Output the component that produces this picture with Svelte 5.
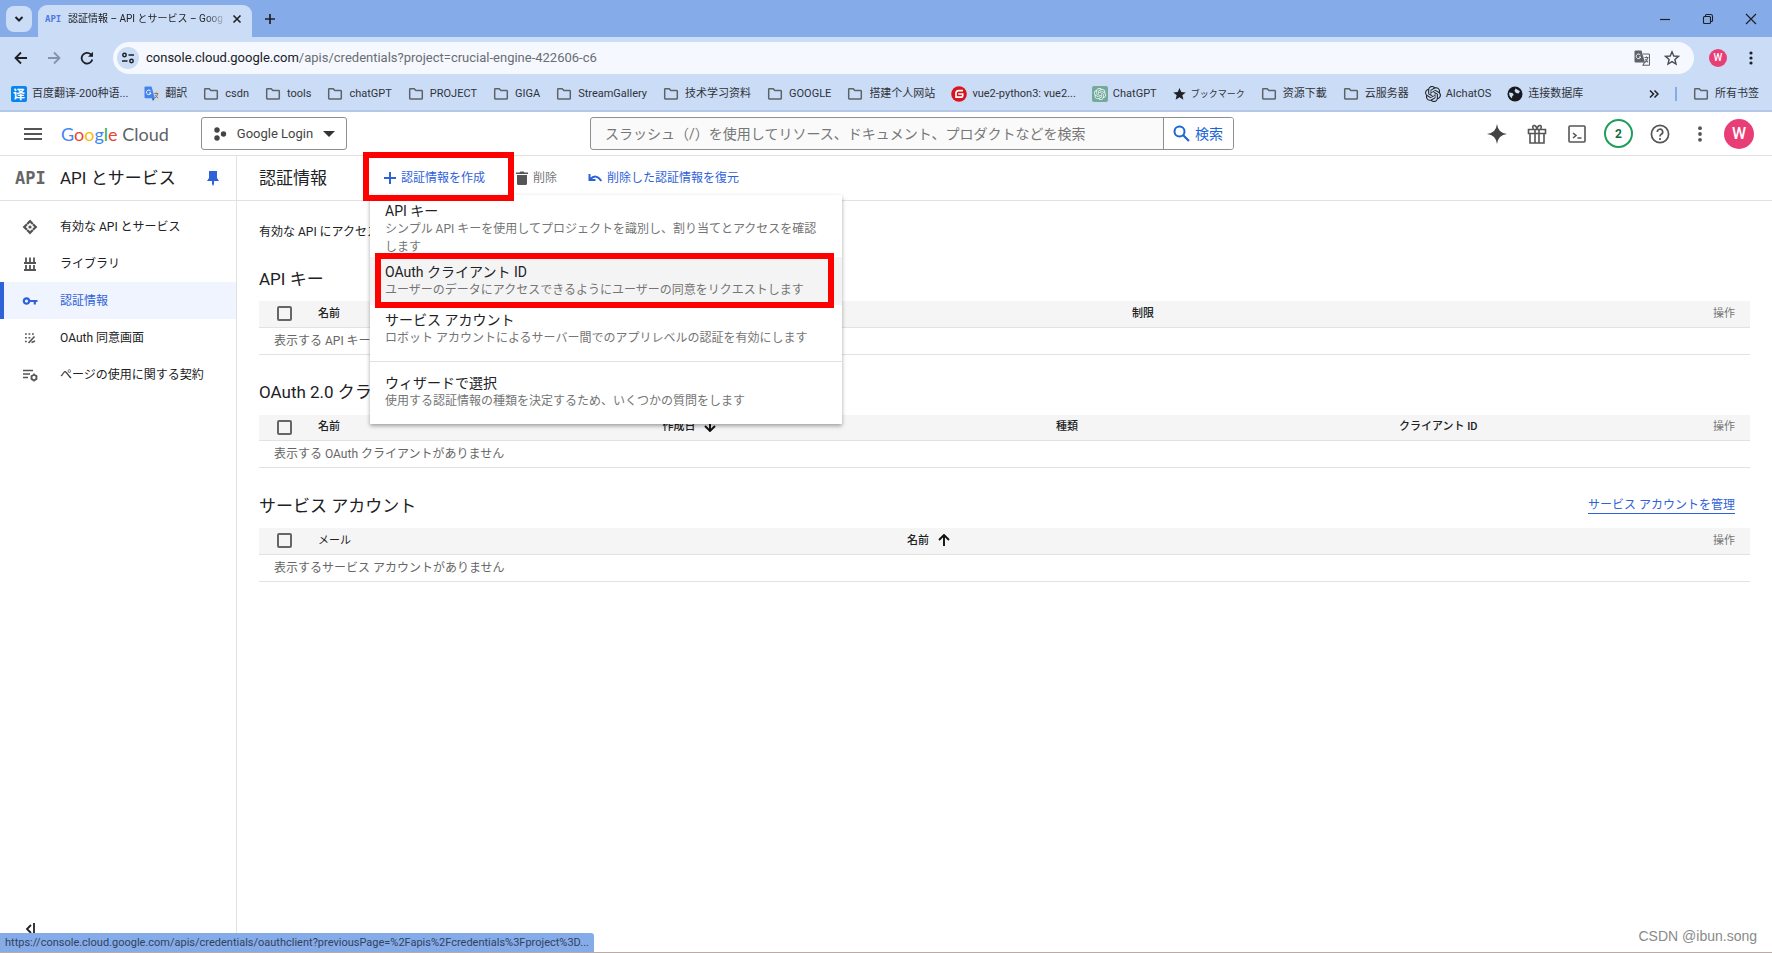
<script lang="ts">
  type Bookmark = { icon: string; label: string };

  const bookmarks: Bookmark[] = [
    { icon: 'baidu', label: '百度翻译-200种语...' },
    { icon: 'gtranslate', label: '翻訳' },
    { icon: 'folder', label: 'csdn' },
    { icon: 'folder', label: 'tools' },
    { icon: 'folder', label: 'chatGPT' },
    { icon: 'folder', label: 'PROJECT' },
    { icon: 'folder', label: 'GIGA' },
    { icon: 'folder', label: 'StreamGallery' },
    { icon: 'folder', label: '技术学习资料' },
    { icon: 'folder', label: 'GOOGLE' },
    { icon: 'folder', label: '搭建个人网站' },
    { icon: 'gitee', label: 'vue2-python3: vue2...' },
    { icon: 'gpt', label: 'ChatGPT' },
    { icon: 'star', label: 'ブックマーク' },
    { icon: 'folder', label: '资源下載' },
    { icon: 'folder', label: '云服务器' },
    { icon: 'knot', label: 'AIchatOS' },
    { icon: 'globe', label: '连接数据库' },
  ];

  const navItems = [
    { icon: 'diamond', label: '有効な API とサービス' },
    { icon: 'library', label: 'ライブラリ' },
    { icon: 'key', label: '認証情報' },
    { icon: 'consent', label: 'OAuth 同意画面' },
    { icon: 'terms', label: 'ページの使用に関する契約' },
  ];

  let current = $state('認証情報');
  let menuOpen = $state(true);
  let query = $state('');
</script>

{#snippet knot(size: number, offset: number, color: string)}
  <svg x={offset} y={offset} width={size} height={size} viewBox="0 0 24 24" fill={color}>
    <path d="M22.2819 9.8211a5.9847 5.9847 0 0 0-.5157-4.9108 6.0462 6.0462 0 0 0-6.5098-2.9A6.0651 6.0651 0 0 0 4.9807 4.1818a5.9847 5.9847 0 0 0-3.9977 2.9 6.0462 6.0462 0 0 0 .7427 7.0966 5.98 5.98 0 0 0 .511 4.9107 6.051 6.051 0 0 0 6.5146 2.9001A5.9847 5.9847 0 0 0 13.2599 24a6.0557 6.0557 0 0 0 5.7718-4.2058 5.9894 5.9894 0 0 0 3.9977-2.9001 6.0557 6.0557 0 0 0-.7475-7.0729zm-9.022 12.6081a4.4755 4.4755 0 0 1-2.8764-1.0408l.1419-.0804 4.7783-2.7582a.7948.7948 0 0 0 .3927-.6813v-6.7369l2.02 1.1686a.071.071 0 0 1 .038.052v5.5826a4.504 4.504 0 0 1-4.4945 4.4944zm-9.6607-4.1254a4.4708 4.4708 0 0 1-.5346-3.0137l.142.0852 4.783 2.7582a.7712.7712 0 0 0 .7806 0l5.8428-3.3685v2.3324a.0804.0804 0 0 1-.0332.0615L9.74 19.9502a4.4992 4.4992 0 0 1-6.1408-1.6464zM2.3408 7.8956a4.485 4.485 0 0 1 2.3655-1.9728V11.6a.7664.7664 0 0 0 .3879.6765l5.8144 3.3543-2.0201 1.1685a.0757.0757 0 0 1-.071 0l-4.8303-2.7865A4.504 4.504 0 0 1 2.3408 7.872zm16.5963 3.8558L13.1038 8.364 15.1192 7.2a.0757.0757 0 0 1 .071 0l4.8303 2.7913a4.4944 4.4944 0 0 1-.6765 8.1042v-5.6772a.79.79 0 0 0-.407-.667zm2.0107-3.0231l-.142-.0852-4.7735-2.7818a.7759.7759 0 0 0-.7854 0L9.409 9.2297V6.8974a.0662.0662 0 0 1 .0284-.0615l4.8303-2.7866a4.4992 4.4992 0 0 1 6.6802 4.66zM8.3065 12.863l-2.02-1.1638a.0804.0804 0 0 1-.038-.0567V6.0742a4.4992 4.4992 0 0 1 7.3757-3.4537l-.142.0805L8.704 5.459a.7948.7948 0 0 0-.3927.6813zm1.0976-2.3654l2.602-1.4998 2.6069 1.4998v2.9994l-2.5974 1.4997-2.6067-1.4997Z" />
  </svg>
{/snippet}

{#snippet bookmarkIcon(name: string)}
  <svg class="bm-icon" viewBox="0 0 16 16" aria-hidden="true">
    {#if name === 'folder'}
      <path d="M1.7 12.2V3.4q0-.7.7-.7h3.8l1.7 1.8h5.7q.7 0 .7.7v7q0 .8-.7.8H2.4q-.7 0-.7-.8z" fill="none" stroke="#5f6368" stroke-width="1.5" />
    {:else if name === 'baidu'}
      <rect width="16" height="16" rx="2" fill="#0a84f0" />
      <text x="8" y="12.5" text-anchor="middle" font-size="12" font-weight="700" fill="#fff">译</text>
    {:else if name === 'gtranslate'}
      <path d="M6 4h8.5q1 0 1 1v9q0 1-1 1H9z" fill="#d5d9df" />
      <path d="M1.5.5h6l3.4 11.8H1.5q-1 0-1-1V1.5q0-1 1-1z" fill="#4483ee" />
      <path d="M7.8 12.3h3.1L9 15z" fill="#2458bd" />
      <path d="M6.8 5.2A2.3 2.3 0 1 0 7 7H5" fill="none" stroke="#fff" />
      <path d="M10.3 7.5h4M12.3 6.5v1M11 12q2.4-1.6 2.6-4.4M11.4 9q.7 1.8 2.8 3" fill="none" stroke="#68707a" stroke-width=".9" />
    {:else if name === 'gitee'}
      <circle cx="8" cy="8" r="7.8" fill="#d9141e" />
      <path d="M12 4.7H7.5Q5 4.7 5 7.2v4h5q1.7 0 1.7-1.7V8H7.3" fill="none" stroke="#fff" stroke-width="1.7" />
    {:else if name === 'gpt'}
      <rect width="16" height="16" rx="2" fill="#74aa9c" />
      {@render knot(12, 2, '#f2faf7')}
    {:else if name === 'star'}
      <path d="m8 .5 2.2 5 5.5.5-4.2 3.600 1.300 5.400L8 12.100 3.200 15l1.300-5.400L.3 6l5.500-.5z" fill="#202124" />
    {:else if name === 'knot'}
      {@render knot(16, 0, '#202226')}
    {:else if name === 'globe'}
      <circle cx="8" cy="8" r="7.5" fill="#17191d" />
      <path d="M2 6.500 5.500 7l1.300 2-1.500 1-.3 2.500L2.600 10zM8.500 2.500l4.500 2.700-1.500 2.300-2.500-.6-1.500-2z" fill="#cbdbf7" />
    {/if}
  </svg>
{/snippet}

{#snippet navIcon(name: string)}
  <svg class="nav-icon" viewBox="0 0 16 16" aria-hidden="true">
    {#if name === 'diamond'}
      {#each [0, 90, 180, 270] as angle}
        <path d="M8 .6 11.600 4.200 10 5.800l-2-2-2 2-1.600-1.600z" fill="currentColor" transform="rotate({angle} 8 8)" />
      {/each}
      <circle cx="8" cy="8" r="1.600" fill="currentColor" />
    {:else if name === 'library'}
      <path d="M2 7h12M2 14h12M4 1.500V7M8 1.500V7M12 1.500V7M4 9v5M8 9v5M12 9v5" fill="none" stroke="currentColor" stroke-width="1.800" />
    {:else if name === 'key'}
      <path d="M1.800 8a2.700 2.700 0 1 0 5.400 0 2.700 2.700 0 1 0-5.400 0zM7 8h8.500M12.800 8v3.500" fill="none" stroke="currentColor" stroke-width="2.200" />
    {:else if name === 'consent'}
      <path d="M3 4h1.800M6.500 4h1.800M10 4h1.800M3 7.800h1.800M6.500 7.800h1.800M3 11.500h1.800M12.500 6.500l-6 6.500M9.500 12.500l3.500-1.500" fill="none" stroke="currentColor" stroke-width="1.600" />
    {:else if name === 'terms'}
      <path d="M1 3.500h10M1 7h7M1 10.500h5" fill="none" stroke="currentColor" stroke-width="1.600" />
      <circle cx="12" cy="10.500" r="2.500" fill="none" stroke="currentColor" stroke-width="1.700" />
      <path d="M12 6.600v1.500M12 12.900v1.500M8.700 8.700l1.300.7M14 11.600l1.300.7M8.700 12.300l1.300-.7M14 9.400l1.300-.7" stroke="currentColor" stroke-width="1.600" />
    {/if}
  </svg>
{/snippet}

<div class="window">
  <div class="tab-strip">
    <button class="tab-search" aria-label="タブを検索">
      <svg width="12" height="12" viewBox="0 0 12 12"><path d="m2.500 4 3.500 3.500L9.500 4" fill="none" stroke="#1f2024" stroke-width="2" /></svg>
    </button>
    <div class="tab">
      <span class="tab-favicon">API</span>
      <span class="tab-title">認証情報 – API とサービス – Goog</span>
      <button class="icon-btn tab-close" aria-label="タブを閉じる">
        <svg width="10" height="10" viewBox="0 0 10 10"><path d="m1.500 1.500 7 7m0-7-7 7" stroke="#1f2024" stroke-width="1.600" /></svg>
      </button>
    </div>
    <button class="icon-btn new-tab" aria-label="新しいタブ">
      <svg width="12" height="12" viewBox="0 0 12 12"><path d="M6 1v10M1 6h10" stroke="#1f2024" stroke-width="1.700" /></svg>
    </button>
    <div class="window-controls">
      <button class="icon-btn" aria-label="最小化">
        <svg width="12" height="12" viewBox="0 0 12 12"><path d="M1 6.500h10" stroke="#1f2024" stroke-width="1.200" /></svg>
      </button>
      <button class="icon-btn" aria-label="元に戻す">
        <svg width="12" height="12" viewBox="0 0 12 12"><path d="M3.500 3.200V2.500q0-1 1-1h4.200q1.800 0 1.800 1.800v4.200q0 1-1 1h-.7M1.500 4.500q0-1 1-1h5q1 0 1 1v5q0 1-1 1h-5q-1 0-1-1z" fill="none" stroke="#1f2024" stroke-width="1.100" /></svg>
      </button>
      <button class="icon-btn" aria-label="閉じる">
        <svg width="12" height="12" viewBox="0 0 12 12"><path d="m1 1 10 10M11 1 1 11" stroke="#1f2024" stroke-width="1.200" /></svg>
      </button>
    </div>
  </div>

  <div class="toolbar">
    <button class="icon-btn" aria-label="戻る">
      <svg width="14" height="14" viewBox="0 0 14 14"><path d="M13 7H2M7 1.500 1.500 7 7 12.500" fill="none" stroke="#1f2024" stroke-width="1.800" /></svg>
    </button>
    <button class="icon-btn" aria-label="進む" disabled>
      <svg width="14" height="14" viewBox="0 0 14 14"><path d="M1 7h11M7 1.500 12.500 7 7 12.500" fill="none" stroke="#8492ab" stroke-width="1.800" /></svg>
    </button>
    <button class="icon-btn" aria-label="再読み込み">
      <svg width="14" height="14" viewBox="0 0 14 14"><path d="M12.300 8.500a5.400 5.400 0 1 1-1.600-5.300l1.600 1.600" fill="none" stroke="#1f2024" stroke-width="1.800" /><path d="M13 .8v5H8z" fill="#1f2024" /></svg>
    </button>
    <div class="omnibox">
      <button class="site-info" aria-label="サイト情報">
        <svg width="14" height="14" viewBox="0 0 14 14"><path d="M7.500 4H13M1 10h5.500" stroke="#1f2024" stroke-width="1.700" /><circle cx="3.500" cy="4" r="1.700" fill="none" stroke="#1f2024" stroke-width="1.500" /><circle cx="10.500" cy="10" r="1.700" fill="none" stroke="#1f2024" stroke-width="1.500" /></svg>
      </button>
      <span class="url"><span class="host">console.cloud.google.com</span>/apis/credentials?project=crucial-engine-422606-c6</span>
      <button class="icon-btn" aria-label="このページを翻訳">
        <svg width="16" height="16" viewBox="0 0 16 16"><path d="M1.500.5h6l3.500 12H1.500q-1 0-1-1v-10q0-1 1-1z" fill="#5f6368" /><path d="M6.500 5.200A2.300 2.300 0 1 0 6.700 7H5" fill="none" stroke="#f5f8fe" /><path d="M9 4h5.500q1 0 1 1v9.500q0 .8-1 .8H9l1.500-3M10.500 7.500h4M12.500 6.500v1M10.800 12.500q2.600-2 2.900-4.800M11.500 9q.7 2 2.500 3.200" fill="none" stroke="#5f6368" stroke-width="1.100" /></svg>
      </button>
      <button class="icon-btn" aria-label="ブックマークに追加">
        <svg width="16" height="16" viewBox="0 0 16 16"><path d="m8 1.800 1.800 4.200 4.700.4-3.600 3.100 1.100 4.500L8 11.600 4 14l1.100-4.500-3.600-3.100L6.200 6z" fill="none" stroke="#4a4d52" stroke-width="1.400" /></svg>
      </button>
    </div>
    <button class="avatar small" aria-label="プロフィール">W</button>
    <button class="icon-btn" aria-label="メニュー">
      <svg width="4" height="16" viewBox="0 0 4 16" fill="#1f2024"><circle cx="2" cy="3" r="1.600" /><circle cx="2" cy="8" r="1.600" /><circle cx="2" cy="13" r="1.600" /></svg>
    </button>
  </div>

  <nav class="bookmarks" aria-label="ブックマーク バー">
    {#each bookmarks as bookmark}
      <a href="#bookmark" class:site={bookmark.icon !== 'folder'} class:kana={bookmark.icon === 'star'}>
        {@render bookmarkIcon(bookmark.icon)}
        <span>{bookmark.label}</span>
      </a>
    {/each}
    <button class="icon-btn overflow" aria-label="その他のブックマーク">
      <svg width="10" height="10" viewBox="0 0 10 10"><path d="m1 1.500 3.500 3.500L1 8.500M5.500 1.500 9 5 5.500 8.500" fill="none" stroke="#1f2024" stroke-width="1.500" /></svg>
    </button>
    <span class="separator"></span>
    <a href="#all">
      {@render bookmarkIcon('folder')}
      <span>所有书签</span>
    </a>
  </nav>

  <header class="console-bar">
    <button class="icon-btn hamburger" aria-label="ナビゲーション メニュー">
      <svg width="18" height="12" viewBox="0 0 18 12"><path d="M0 1h18M0 6h18M0 11h18" stroke="#555" stroke-width="2" /></svg>
    </button>
    <a class="logo" href="#home" aria-label="Google Cloud">
      <span class="blue">G</span><span class="red">o</span><span class="yellow">o</span><span class="blue">g</span><span class="green">l</span><span class="red">e</span> Cloud
    </a>
    <button class="project">
      <svg width="14" height="14" viewBox="0 0 14 14" fill="#444"><circle cx="4" cy="3" r="2.700" /><circle cx="10.500" cy="7" r="2.700" /><circle cx="4" cy="11" r="2.700" /></svg>
      Google Login
      <svg width="12" height="6" viewBox="0 0 12 6"><path d="M0 0h12L6 6z" fill="#333" /></svg>
    </button>
    <form class="search" onsubmit={(e) => e.preventDefault()}>
      <input type="search" aria-label="検索" bind:value={query} placeholder="スラッシュ（/）を使用してリソース、ドキュメント、プロダクトなどを検索" />
      <button>
        <svg width="17" height="17" viewBox="0 0 17 17"><circle cx="6.500" cy="6.500" r="5" fill="none" stroke="#1b66d6" stroke-width="2" /><path d="m10 10 6 6" stroke="#1b66d6" stroke-width="2.200" /></svg>
        検索
      </button>
    </form>
    <div class="actions">
      <button class="icon-btn" aria-label="Gemini">
        <svg width="20" height="20" viewBox="0 0 20 20"><path d="M10 0q1 9 10 10-9 1-10 10-1-9-10-10 9-1 10-10z" fill="#444" /></svg>
      </button>
      <button class="icon-btn" aria-label="無料トライアル">
        <svg width="20" height="20" viewBox="0 0 20 20" fill="none" stroke="#555" stroke-width="1.600"><path d="M1.500 5.500h17v4h-17zM3 9.500h14V19H3zM8 5.500V19M12 5.500V19" /><path d="M10 5Q9 1 6.800 1.500 4.800 2.500 6.500 5M10 5q1-4 3.200-3.500 2 1 .3 3.500" /></svg>
      </button>
      <button class="icon-btn" aria-label="Cloud Shell">
        <svg width="18" height="18" viewBox="0 0 18 18" fill="none" stroke="#555" stroke-width="1.600"><rect x="1" y="1" width="16" height="16" rx="1" /><path d="m5 8 3 2.500L5 13M9.500 13h4" /></svg>
      </button>
      <button class="badge" aria-label="通知 2 件">2</button>
      <button class="icon-btn" aria-label="ヘルプ">
        <svg width="20" height="20" viewBox="0 0 20 20" fill="none" stroke="#555" stroke-width="1.700"><circle cx="10" cy="10" r="8.600" /><path d="M7.300 8a2.700 2.700 0 1 1 4 2.300q-1.300.7-1.300 2.200M10 14v1.900" /></svg>
      </button>
      <button class="icon-btn" aria-label="設定とユーティリティ">
        <svg width="4" height="16" viewBox="0 0 4 16" fill="#555"><circle cx="2" cy="2.200" r="1.900" /><circle cx="2" cy="8" r="1.900" /><circle cx="2" cy="13.800" r="1.900" /></svg>
      </button>
      <button class="avatar" aria-label="アカウント">W</button>
    </div>
  </header>

  <div class="body">
    <aside>
      <div class="aside-head">
        <span class="api-mark">API</span>
        <h2>API とサービス</h2>
        <button class="icon-btn" aria-label="固定">
          <svg width="12" height="16" viewBox="0 0 12 16"><path d="M2 1h8v7l2 3H7v3l-1 2-1-2v-3H0l2-3z" fill="#2f62d9" /></svg>
        </button>
      </div>
      <nav class="side-nav">
        {#each navItems as item}
          <a href="#nav" class:active={current === item.label} onclick={() => (current = item.label)}>
            {@render navIcon(item.icon)}
            {item.label}
          </a>
        {/each}
      </nav>
      <div class="aside-foot">
        <button class="icon-btn" aria-label="メニューを閉じる">
          <svg width="10" height="12" viewBox="0 0 10 12"><path d="M6 2 2 6l4 4M9 0v12" fill="none" stroke="#222" stroke-width="1.800" /></svg>
        </button>
      </div>
    </aside>

    <main>
      <div class="page-head">
        <h1>認証情報</h1>
        <div class="create">
          <button class="action" onclick={() => (menuOpen = !menuOpen)}>
            <svg width="12" height="12" viewBox="0 0 12 12"><path d="M6 0v12M0 6h12" stroke="#2f62d9" stroke-width="2" /></svg>
            認証情報を作成
          </button>
          {#if menuOpen}
            <div class="menu" role="menu">
              <button class="wrap" role="menuitem">
                <b>API キー</b>
                <small>シンプル API キーを使用してプロジェクトを識別し、割り当てとアクセスを確認します</small>
              </button>
              <button class="hovered" role="menuitem">
                <b>OAuth クライアント ID</b>
                <small>ユーザーのデータにアクセスできるようにユーザーの同意をリクエストします</small>
              </button>
              <button role="menuitem">
                <b>サービス アカウント</b>
                <small>ロボット アカウントによるサーバー間でのアプリレベルの認証を有効にします</small>
              </button>
              <hr />
              <button role="menuitem">
                <b>ウィザードで選択</b>
                <small>使用する認証情報の種類を決定するため、いくつかの質問をします</small>
              </button>
              <div class="mark mark-item"></div>
            </div>
          {/if}
          <div class="mark mark-button"></div>
        </div>
        <button class="action delete" disabled>
          <svg width="12" height="14" viewBox="0 0 12 14"><path d="M0 1.500h3.500L4.500.5h3l1 1H12V3H0zM1 4h10v8.500q0 1.500-1.500 1.500h-7Q1 14 1 12.500z" fill="#555" /></svg>
          削除
        </button>
        <button class="action">
          <svg width="14" height="8" viewBox="0 0 14 8"><path d="M1.500 0v6h6M2 5.500q6-6.500 11.300 1.500" fill="none" stroke="#2f62d9" stroke-width="2" /></svg>
          削除した認証情報を復元
        </button>
      </div>

      <div class="content">
        <p>有効な API にアクセスするための認証情報を作成します。</p>

        <div class="section-head"><h3>API キー</h3></div>
        <table>
          <thead>
            <tr>
              <th class="check"><input type="checkbox" aria-label="すべての API キーを選択" /></th>
              <th class="api-name">名前</th>
              <th class="api-date">作成日</th>
              <th>制限</th>
              <th class="ops">操作</th>
            </tr>
          </thead>
          <tbody><tr><td colspan="5">表示する API キーがありません</td></tr></tbody>
        </table>

        <div class="section-head"><h3>OAuth 2.0 クライアント ID</h3></div>
        <table>
          <thead>
            <tr>
              <th class="check"><input type="checkbox" aria-label="すべてのクライアントを選択" /></th>
              <th class="client-name">名前</th>
              <th class="client-date">
                作成日
                <svg width="12" height="12" viewBox="0 0 12 12"><path d="M6 0v11M1 6l5 5 5-5" fill="none" stroke="#111" stroke-width="1.900" /></svg>
              </th>
              <th class="client-type">種類</th>
              <th>クライアント ID</th>
              <th class="ops">操作</th>
            </tr>
          </thead>
          <tbody><tr><td colspan="6">表示する OAuth クライアントがありません</td></tr></tbody>
        </table>

        <div class="section-head">
          <h3>サービス アカウント</h3>
          <a href="#manage">サービス アカウントを管理</a>
        </div>
        <table>
          <thead>
            <tr>
              <th class="check"><input type="checkbox" aria-label="すべてのサービス アカウントを選択" /></th>
              <th class="account-mail">メール</th>
              <th>
                名前
                <svg width="12" height="12" viewBox="0 0 12 12"><path d="M6 12V1M1 6l5-5 5 5" fill="none" stroke="#111" stroke-width="1.900" /></svg>
              </th>
              <th class="ops">操作</th>
            </tr>
          </thead>
          <tbody><tr><td colspan="4">表示するサービス アカウントがありません</td></tr></tbody>
        </table>
      </div>
    </main>
  </div>

  <div class="status">https://console.cloud.google.com/apis/credentials/oauthclient?previousPage=%2Fapis%2Fcredentials%3Fproject%3D...</div>
  <div class="watermark">CSDN @ibun.song</div>
</div>

<style>
  :global(body) {
    margin: 0;
    background: #fff;
  }

  .window {
    --ui: Roboto, 'Noto Sans CJK SC', sans-serif;
    --blue: #2f62d9;
    --line: #e2e2e2;
    position: relative;
    display: flex;
    flex-direction: column;
    min-height: 100vh;
    box-sizing: border-box;
    border-bottom: 1px solid #b9aca6;
    font-family: Roboto, 'Noto Sans CJK JP', sans-serif;
    font-size: 12px;
    line-height: 18px;
    color: #202124;
  }

  button {
    display: flex;
    align-items: center;
    padding: 0;
    border: 0;
    background: none;
    font: inherit;
    color: inherit;
    cursor: pointer;
  }

  a {
    color: inherit;
    text-decoration: none;
  }

  svg {
    display: block;
    flex-shrink: 0;
  }

  h1,
  h2,
  h3,
  p {
    margin: 0;
    font-weight: 400;
  }

  h1,
  h2,
  h3 {
    font-size: 17px;
    line-height: 24px;
  }

  .icon-btn {
    justify-content: center;
    flex-shrink: 0;
  }

  /* browser chrome */
  .tab-strip {
    display: flex;
    align-items: center;
    height: 37px;
    padding: 0 15px 0 6px;
    background: #85ace9;
  }

  .tab-search {
    justify-content: center;
    width: 26px;
    height: 26px;
    border-radius: 8px;
    background: #cbdcf7;
  }

  .tab {
    display: flex;
    align-items: center;
    align-self: flex-end;
    width: 214px;
    height: 32px;
    box-sizing: border-box;
    margin-left: 6px;
    padding: 0 10px 5px 7px;
    border-radius: 9px 9px 0 0;
    background: #cbdcf7;
  }

  .tab-favicon {
    width: 23px;
    font: 700 9px/16px 'DejaVu Sans Mono', monospace;
    color: #4d7ae0;
  }

  .tab-title {
    flex: 1;
    overflow: hidden;
    white-space: nowrap;
    font-size: 10px;
    mask-image: linear-gradient(90deg, #000 85%, transparent);
  }

  .tab-close {
    margin-left: 4px;
  }

  .new-tab {
    margin-left: 12px;
  }

  .window-controls {
    display: flex;
    gap: 31px;
    margin-left: auto;
  }

  .toolbar {
    display: flex;
    align-items: center;
    gap: 19px;
    padding: 5px 19px 5px 14px;
    background: #cbdcf7;
    font-family: var(--ui);
  }

  .omnibox {
    display: flex;
    flex: 1;
    align-items: center;
    gap: 14px;
    height: 32px;
    margin-right: -4px;
    padding: 0 14px 0 4px;
    border-radius: 16px;
    background: #f5f8fe;
  }

  .site-info {
    justify-content: center;
    width: 22px;
    height: 22px;
    margin-right: -7px;
    border-radius: 50%;
    background: #cbdcf7;
  }

  .url {
    flex: 1;
    font-size: 13px;
    color: #6a6d72;
  }

  .host {
    color: #202124;
  }

  .avatar {
    justify-content: center;
    width: 30px;
    height: 30px;
    margin-left: 4px;
    border-radius: 50%;
    background: #e93d76;
    color: #fff;
    font: 500 16px/30px Roboto, sans-serif;
  }

  .avatar.small {
    width: 18px;
    height: 18px;
    margin: 0 3px 0 0;
    font-size: 10px;
  }

  .bookmarks {
    display: flex;
    align-items: center;
    gap: 16px;
    height: 33px;
    padding: 0 13px 2px 11px;
    box-sizing: border-box;
    border-bottom: 2px solid #b4c7e6;
    background: #cbdcf7;
    font-family: var(--ui);
    font-size: 11px;
    white-space: nowrap;
    color: #303338;
  }

  .bookmarks a {
    display: flex;
    align-items: center;
    gap: 6px;
  }

  .bookmarks .site {
    gap: 5px;
  }

  .bookmarks .kana {
    font-size: 9px;
  }

  .bm-icon {
    width: 16px;
    height: 16px;
  }

  .kana .bm-icon {
    width: 13px;
  }

  .overflow {
    margin-left: auto;
  }

  .separator {
    width: 2px;
    height: 14px;
    background: #85ace9;
  }

  /* console header */
  .console-bar {
    display: flex;
    align-items: center;
    height: 43px;
    padding: 0 18px 0 24px;
    border-bottom: 1px solid var(--line);
  }

  .logo {
    margin-left: 19px;
    font: 400 18px/24px Lato, sans-serif;
    color: #5f6368;
    white-space: nowrap;
  }

  .logo .blue { color: #4285f4; }
  .logo .red { color: #ea4335; }
  .logo .yellow { color: #fbbc04; }
  .logo .green { color: #34a853; }

  .project {
    gap: 10px;
    height: 33px;
    margin-left: 32px;
    padding: 0 11px;
    border: 1px solid #8c8f94;
    border-radius: 3px;
    font-size: 13px;
    color: #444;
    white-space: nowrap;
    box-sizing: border-box;
  }

  .search {
    display: flex;
    width: 644px;
    height: 33px;
    box-sizing: border-box;
    margin: 0 auto;
    border: 1px solid #8c8f94;
    border-radius: 3px;
    background: #fafafa;
  }

  .search input {
    flex: 1;
    min-width: 0;
    padding: 0 14px;
    border: 0;
    background: none;
    font: inherit;
    font-size: 14px;
    outline: 0;
  }

  .search input::placeholder {
    color: #777;
  }

  .search button {
    gap: 5px;
    padding: 0 10px 0 9px;
    border-left: 1px solid #8c8f94;
    border-radius: 0 2px 2px 0;
    background: #fff;
    font-size: 14px;
    color: #1b66d6;
  }

  .actions {
    display: flex;
    align-items: center;
  }

  .actions .icon-btn {
    width: 40px;
  }

  .badge {
    justify-content: center;
    width: 29px;
    height: 29px;
    margin: 0 7px;
    border: 2px solid #1e9e5a;
    border-radius: 50%;
    box-sizing: border-box;
    font-weight: 700;
    color: #176b3d;
  }

  .body {
    display: flex;
    flex: 1;
  }

  aside {
    display: flex;
    flex-direction: column;
    width: 237px;
    box-sizing: border-box;
    border-right: 1px solid var(--line);
  }

  .aside-head {
    display: flex;
    align-items: center;
    height: 44px;
    padding: 0 17px 0 15px;
    border-bottom: 1px solid var(--line);
  }

  .aside-head h2 {
    flex: 1;
    margin-left: 12px;
  }

  .api-mark {
    width: 33px;
    font: 700 17px/24px 'DejaVu Sans Mono', monospace;
    color: #666;
  }

  .side-nav {
    padding-top: 7px;
  }

  .side-nav a {
    display: flex;
    align-items: center;
    gap: 22px;
    height: 37px;
    padding-left: 18px;
    border-left: 4px solid transparent;
    color: #202124;
  }

  .side-nav a.active {
    border-color: var(--blue);
    background: #eff4fe;
    color: var(--blue);
  }

  .nav-icon {
    width: 16px;
    height: 16px;
    color: #555;
  }

  .active .nav-icon {
    color: var(--blue);
  }

  .aside-foot {
    display: flex;
    align-items: flex-start;
    height: 29px;
    margin-top: auto;
    padding-left: 25px;
  }

  main {
    flex: 1;
    min-width: 0;
  }

  .page-head {
    display: flex;
    align-items: center;
    height: 44px;
    padding-left: 22px;
    border-bottom: 1px solid var(--line);
    white-space: nowrap;
  }

  .create {
    position: relative;
    display: flex;
    align-items: center;
    height: 44px;
    width: 139px;
    margin-left: 42px;
    padding-left: 15px;
    box-sizing: border-box;
  }

  .action {
    gap: 5px;
    color: var(--blue);
  }

  .delete {
    margin: 0 31px 0 8px;
    color: #777;
  }

  .menu {
    position: absolute;
    z-index: 1;
    top: 39px;
    left: 1px;
    width: 472px;
    padding: 1px 0 8px;
    box-sizing: border-box;
    background: #fff;
    box-shadow: 0 2px 4px rgba(0, 0, 0, 0.35);
    white-space: normal;
  }

  .menu button {
    display: block;
    width: 100%;
    padding: 6px 15px;
    text-align: left;
  }

  .menu .wrap {
    padding-bottom: 1px;
  }

  .menu .hovered {
    background: #f4f4f4;
  }

  .menu b {
    display: block;
    font-size: 14px;
    font-weight: 400;
  }

  .menu small {
    display: block;
    font-size: 12px;
    color: #757575;
  }

  .menu hr {
    margin: 8px 0 6px;
    border: 0;
    border-top: 1px solid var(--line);
  }

  .mark {
    position: absolute;
    z-index: 2;
    border: 6px solid #f00;
    box-sizing: border-box;
    pointer-events: none;
  }

  .mark-button {
    top: -4px;
    left: -6px;
    right: -6px;
    height: 49px;
  }

  .mark-item {
    top: 58px;
    left: 5px;
    right: 8px;
    height: 55px;
  }

  .content {
    padding: 22px 22px 0;
  }

  .section-head {
    display: flex;
    align-items: center;
    justify-content: space-between;
    height: 60px;
    padding: 15px 15px 0 0;
    box-sizing: border-box;
  }

  .section-head a {
    border-bottom: 1px solid var(--blue);
    line-height: 16px;
    color: var(--blue);
  }

  table {
    width: 100%;
    table-layout: fixed;
    border-collapse: collapse;
  }

  th {
    height: 26px;
    padding: 0;
    border-bottom: 1px solid var(--line);
    background: #f5f5f5;
    box-sizing: border-box;
    font-size: 11px;
    line-height: 16px;
    font-weight: 500;
    text-align: left;
    white-space: nowrap;
  }

  th svg {
    display: inline-block;
    margin-left: 6px;
    vertical-align: -2px;
  }

  td {
    height: 27px;
    padding: 0 15px;
    border-bottom: 1px solid var(--line);
    box-sizing: border-box;
    color: #666;
  }

  .check {
    width: 59px;
    padding-left: 18px;
    box-sizing: border-box;
  }

  .check input {
    display: block;
    width: 15px;
    height: 15px;
    margin: 0;
    appearance: none;
    border: 2px solid #666;
    border-radius: 2px;
  }

  .api-name { width: 27%; }
  .api-date { width: 27.6%; }
  .client-name { width: 23.1%; }
  .client-date { width: 26.4%; }
  .client-type { width: 23%; }

  .account-mail {
    width: 39.5%;
    font-weight: 400;
  }

  .ops {
    width: 60px;
    padding-right: 15px;
    font-weight: 400;
    text-align: right;
    color: #757575;
  }

  .status {
    position: absolute;
    bottom: 0;
    left: 0;
    max-width: 100%;
    padding: 1px 5px 0;
    border-radius: 0 3px 0 0;
    background: #85ace9;
    font: 11px/18px var(--ui);
    color: #33415c;
    white-space: nowrap;
  }

  .watermark {
    position: absolute;
    right: 15px;
    bottom: 6px;
    font: 14px/20px 'Liberation Sans', sans-serif;
    color: #8a8a8a;
  }
</style>
